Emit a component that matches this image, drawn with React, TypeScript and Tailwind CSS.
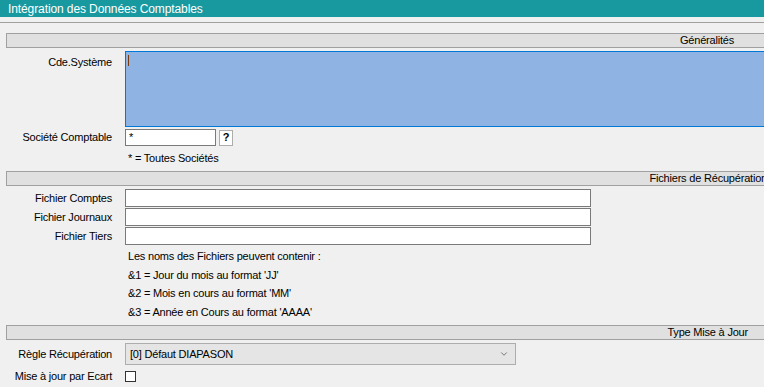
import { ChevronDown } from 'lucide-react'

const font = { fontFamily: '"Liberation Sans", Arial, sans-serif' }

function GroupHeader({ title, pad }: { title: string; pad: string }) {
  return (
    <div className="ml-[6px] flex h-[15px] items-center justify-end border-y border-l border-[#a0a0a0] bg-[#e0e0e0]">
      <span className={`whitespace-nowrap text-[11px] leading-none tracking-[-0.2px] text-black ${pad}`}>{title}</span>
    </div>
  )
}

function Row({ label, children, h }: { label: string; children: React.ReactNode; h: string }) {
  return (
    <div className={`flex items-center ${h}`}>
      <div className="w-[112px] shrink-0 whitespace-nowrap text-right text-[11px] tracking-[-0.2px] text-black">{label}</div>
      <div className="ml-[13px] flex flex-1 items-center">{children}</div>
    </div>
  )
}

export default function App() {
  return (
    <div className="h-[387px] w-[764px] overflow-hidden bg-[#f0f0f0]" style={font}>
      <div className="flex h-[17px] items-center bg-[#18989f] pl-[8px] text-[12px] tracking-[-0.1px] text-white">
        Intégration des Données Comptables
      </div>
      <div className="mt-[5px] border-t border-[#a0a0a0]" />

      {/* Généralités */}
      <div className="mt-[10px]">
        <GroupHeader title="Généralités" pad="pr-[30px]" />
      </div>
      <div className="mt-[3px] flex">
        <div className="w-[112px] shrink-0 pt-[3px] text-right text-[11px] tracking-[-0.2px] text-black">Cde.Système</div>
        <div className="ml-[13px] h-[76px] flex-1 border border-r-0 border-[#0078d7] bg-[#8fb3e3] pl-[2px] pt-[3px]">
          <div className="h-[11px] w-px bg-[#7a3b10]" />
        </div>
      </div>
      <div className="mt-[2px]">
        <Row label="Société Comptable" h="h-[17px]">
          <div className="h-[17px] w-[91px] border border-[#7a7a7a] bg-white pl-[3px] text-[11px] leading-[15px]">*</div>
          <div className="ml-[3px] flex h-[16px] w-[14px] items-center justify-center border border-[#adadad] bg-white text-[11px] font-bold leading-none">?</div>
        </Row>
      </div>
      <div className="ml-[128px] mt-[5px] text-[11px] leading-[14px] tracking-[-0.2px] text-black">* = Toutes Sociétés</div>

      {/* Fichiers de Récupération */}
      <div className="mt-[6px]">
        <GroupHeader title="Fichiers de Récupération" pad="mr-[-3px]" />
      </div>
      <div className="mt-[3px] flex flex-col gap-[1px]">
        {['Fichier Comptes', 'Fichier Journaux', 'Fichier Tiers'].map((l) => (
          <Row key={l} label={l} h="h-[18px]">
            <div className="h-[18px] w-[466px] border border-[#7a7a7a] bg-white" />
          </Row>
        ))}
      </div>
      <div className="ml-[128px] mt-[2px] text-[11px] leading-[18.5px] tracking-[-0.2px] text-black">
        <div>Les noms des Fichiers peuvent contenir :</div>
        <div>&amp;1 = Jour du mois au format 'JJ'</div>
        <div>&amp;2 = Mois en cours au format 'MM'</div>
        <div>&amp;3 = Année en Cours au format 'AAAA'</div>
      </div>

      {/* Type Mise à Jour */}
      <div className="mt-[4px]">
        <GroupHeader title="Type Mise à Jour" pad="pr-[16px]" />
      </div>
      <div className="mt-[3px]">
        <Row label="Règle Récupération" h="h-[22px]">
          <div className="flex h-[22px] w-[391px] items-center justify-between border border-[#adadad] bg-[#e5e5e5] pl-[4px] pr-[6px] text-[11px] tracking-[-0.2px] text-black">
            <span>[0] Défaut DIAPASON</span>
            <ChevronDown className="h-[10px] w-[10px] text-[#333]" strokeWidth={1.5} />
          </div>
        </Row>
      </div>
      <div className="mt-[1px]">
        <Row label="Mise à jour par Ecart" h="h-[20px]">
          <div className="h-[11px] w-[11px] border border-[#333] bg-white" />
        </Row>
      </div>
    </div>
  )
}
